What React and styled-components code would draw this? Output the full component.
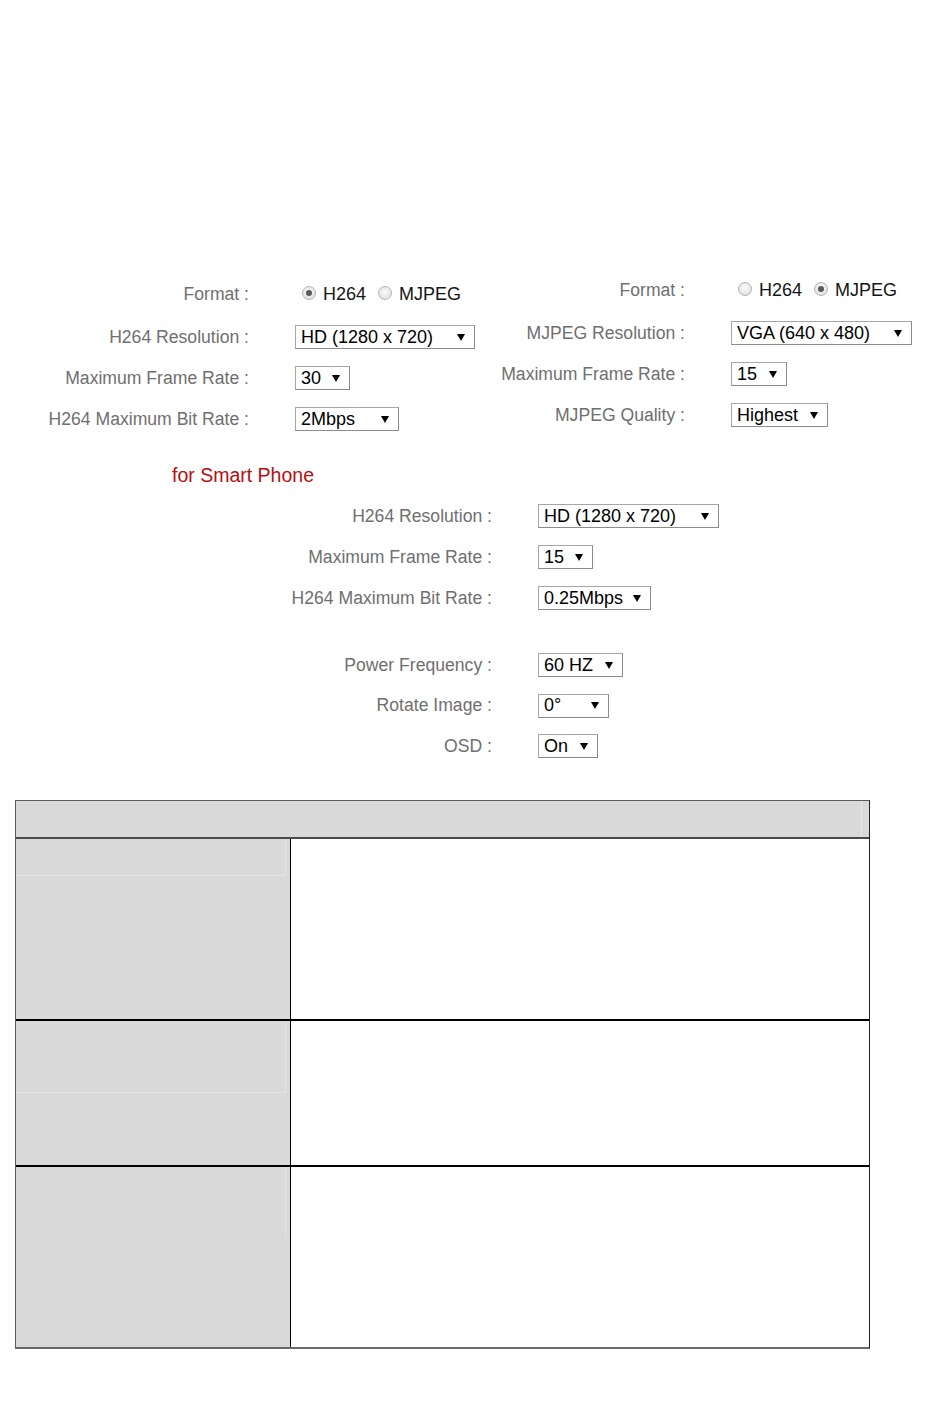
import styled, { createGlobalStyle } from 'styled-components';

const GlobalStyle = createGlobalStyle`
  html, body {
    margin: 0;
    padding: 0;
    background: #ffffff;
  }
  body {
    font-family: 'Liberation Sans', Arial, sans-serif;
  }
`;

const Page = styled.div`
  width: 950px;
  min-height: 1409px;
  box-sizing: border-box;
  padding-top: 278px;
  font-family: 'Liberation Sans', Arial, sans-serif;
  font-size: 18px;
`;

const TopForms = styled.div`
  display: flex;
  align-items: flex-start;
`;

const FormGrid = styled.div`
  display: grid;
  grid-template-columns: ${(p) => p.labelWidth}px auto;
  grid-template-rows: ${(p) => (p.firstRow ? `${p.firstRow}px` : '24px')};
  grid-auto-rows: 24px;
  column-gap: 46px;
  row-gap: ${(p) => p.rowGap || 17}px;
  align-items: start;
  width: ${(p) => (p.width ? `${p.width}px` : 'auto')};
  margin-top: ${(p) => p.top || 0}px;
`;

const Label = styled.div`
  height: 24px;
  display: flex;
  align-items: center;
  justify-content: flex-end;
  white-space: nowrap;
  color: #6f6f6f;
  font-size: 17.6px;
`;

const Control = styled.div`
  height: 24px;
  display: flex;
  align-items: center;
`;

const SelectBox = styled.div`
  width: ${(p) => p.width}px;
  height: 24px;
  box-sizing: border-box;
  display: flex;
  align-items: center;
  justify-content: space-between;
  padding: 0 9px 0 5px;
  border: 1px solid #a6a6a6;
  border-right-color: #8c8c8c;
  border-bottom-color: #8c8c8c;
  background: #ffffff;
  color: #000000;
  white-space: nowrap;
`;

const Arrow = styled.svg`
  flex: none;
  width: 8px;
  height: 7px;
`;

const RadioGroup = styled.div`
  display: flex;
  align-items: center;
  padding-left: 7px;
  color: #151515;
`;

const RadioDot = styled.span`
  width: 14px;
  height: 14px;
  box-sizing: border-box;
  border-radius: 50%;
  border: 1px solid #b4b4b4;
  background: radial-gradient(circle at 50% 40%, #fafafa 0%, #e4e4e4 70%, #d6d6d6 100%);
  display: flex;
  align-items: center;
  justify-content: center;
  margin-right: 7px;
  margin-top: -2px;

  &::after {
    content: '';
    width: 6px;
    height: 6px;
    border-radius: 50%;
    background: ${(p) => (p.checked ? '#5a5a5a' : 'transparent')};
  }
`;

const RadioText = styled.span`
  margin-right: 12px;
`;

const SectionTitle = styled.div`
  margin: 33px 0 0 172px;
  height: 22px;
  line-height: 22px;
  font-size: 19.5px;
  color: #b80e10;
`;

const TableFrame = styled.div`
  width: 855px;
  box-sizing: border-box;
  margin: 42px 0 0 15px;
  border: 1px solid #5a5a5a;
  border-right-color: #222;
  border-bottom: 2px solid #6a6a6a;
`;

const HeaderRow = styled.div`
  height: 36px;
  background: #d9d9d9;
  border-bottom: 2px solid #4a4a4a;
  display: flex;
`;

const HeaderInner = styled.div`
  flex: 1;
  margin-right: 7px;
  border-right: 1px solid #e6e6e6;
`;

const BodyRow = styled.div`
  display: grid;
  grid-template-columns: 275px 1fr;
  height: ${(p) => p.height}px;
  box-sizing: border-box;
  border-top: ${(p) => (p.first ? 'none' : '2px solid #000')};
`;

const KeyCell = styled.div`
  background: #d9d9d9;
  border-right: 1.5px solid #000;
`;

const KeyInner = styled.div`
  height: ${(p) => p.height}px;
  margin-right: 4px;
  border-right: 1px solid #e4e4e4;
  border-bottom: ${(p) => (p.line ? '1px solid #e4e4e4' : 'none')};
`;

const ValueCell = styled.div`
  background: #ffffff;
`;

function Select({ width, value }) {
  return (
    <SelectBox width={width}>
      <span>{value}</span>
      <Arrow viewBox="0 0 8 7">
        <path d="M0 0 H8 L4 7 Z" fill="#000" />
      </Arrow>
    </SelectBox>
  );
}

function FormatRadios({ selected }) {
  return (
    <RadioGroup>
      <RadioDot checked={selected === 'H264'} />
      <RadioText>H264</RadioText>
      <RadioDot checked={selected === 'MJPEG'} />
      <RadioText>MJPEG</RadioText>
    </RadioGroup>
  );
}

function Field({ label, children }) {
  return (
    <>
      <Label>{label} :</Label>
      <Control>{children}</Control>
    </>
  );
}

export default function App() {
  return (
    <>
      <GlobalStyle />
      <Page>
        <TopForms>
          <FormGrid labelWidth={249} width={490} firstRow={26} top={4}>
            <Field label="Format">
              <FormatRadios selected="H264" />
            </Field>
            <Field label="H264 Resolution">
              <Select width={180} value="HD (1280 x 720)" />
            </Field>
            <Field label="Maximum Frame Rate">
              <Select width={55} value="30" />
            </Field>
            <Field label="H264 Maximum Bit Rate">
              <Select width={104} value="2Mbps" />
            </Field>
          </FormGrid>
          <FormGrid labelWidth={195} firstRow={26}>
            <Field label="Format">
              <FormatRadios selected="MJPEG" />
            </Field>
            <Field label="MJPEG Resolution">
              <Select width={181} value="VGA (640 x 480)" />
            </Field>
            <Field label="Maximum Frame Rate">
              <Select width={56} value="15" />
            </Field>
            <Field label="MJPEG Quality">
              <Select width={97} value="Highest" />
            </Field>
          </FormGrid>
        </TopForms>

        <SectionTitle>for Smart Phone</SectionTitle>

        <FormGrid labelWidth={492} top={18}>
          <Field label="H264 Resolution">
            <Select width={181} value="HD (1280 x 720)" />
          </Field>
          <Field label="Maximum Frame Rate">
            <Select width={55} value="15" />
          </Field>
          <Field label="H264 Maximum Bit Rate">
            <Select width={113} value="0.25Mbps" />
          </Field>
        </FormGrid>

        <FormGrid labelWidth={492} top={43} rowGap={16.5}>
          <Field label="Power Frequency">
            <Select width={85} value="60 HZ" />
          </Field>
          <Field label="Rotate Image">
            <Select width={71} value="0°" />
          </Field>
          <Field label="OSD">
            <Select width={60} value="On" />
          </Field>
        </FormGrid>

        <TableFrame>
          <HeaderRow>
            <HeaderInner />
          </HeaderRow>
          <BodyRow first height={180}>
            <KeyCell>
              <KeyInner height={36} line />
            </KeyCell>
            <ValueCell />
          </BodyRow>
          <BodyRow height={146}>
            <KeyCell>
              <KeyInner height={71} line />
            </KeyCell>
            <ValueCell />
          </BodyRow>
          <BodyRow height={182}>
            <KeyCell>
              <KeyInner height={70} />
            </KeyCell>
            <ValueCell />
          </BodyRow>
        </TableFrame>
      </Page>
    </>
  );
}
